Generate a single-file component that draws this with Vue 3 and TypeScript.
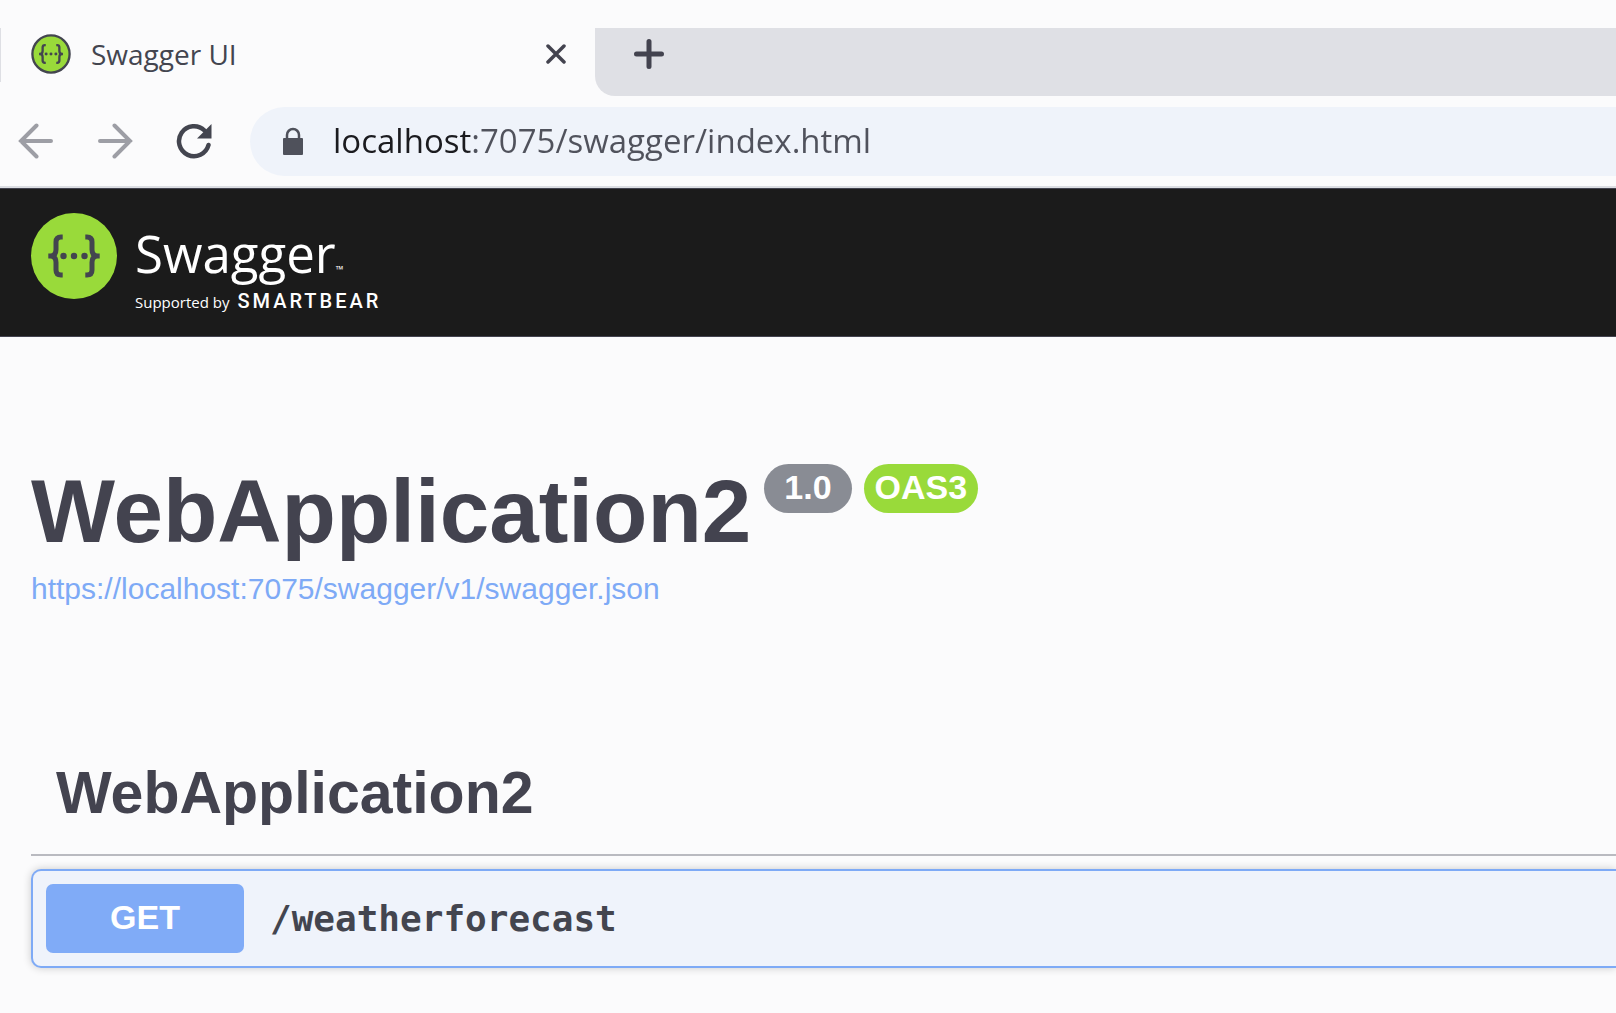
<script setup lang="ts">
import { ref } from 'vue'

interface Operation {
  method: string
  path: string
}

interface ApiInfo {
  title: string
  version: string
  spec: string
  url: string
}

const api: ApiInfo = {
  title: 'WebApplication2',
  version: '1.0',
  spec: 'OAS3',
  url: 'https://localhost:7075/swagger/v1/swagger.json',
}

const operations: Operation[] = [{ method: 'GET', path: '/weatherforecast' }]
const address = ref('localhost:7075/swagger/index.html')
</script>

<template>
  <div class="browser">
    <svg class="defs" aria-hidden="true">
      <symbol id="braces" viewBox="0 0 86 86">
        <g fill="none" stroke="currentColor" stroke-width="5">
          <path d="M31.7 24H30q-5 0-5 5v7.5q0 6.3-5.5 6.5h-2.2h2.2q5.5.2 5.5 6.5V57q0 5 5 5h1.7" />
          <path d="M54.3 24H56q5 0 5 5v7.5q0 6.3 5.5 6.5h2.2h-2.2q-5.5.2-5.5 6.5V57q0 5-5 5h-1.7" />
        </g>
        <g fill="currentColor">
          <circle cx="32.5" cy="43" r="3.2" />
          <circle cx="43" cy="43" r="3.2" />
          <circle cx="53.5" cy="43" r="3.2" />
        </g>
      </symbol>
    </svg>

    <div class="tabs">
      <div class="tab">
        <svg class="favicon" viewBox="0 0 86 86" aria-hidden="true">
          <circle cx="43" cy="43" r="40" fill="#99da3a" stroke="#43454f" stroke-width="5" />
          <use href="#braces" />
        </svg>
        <span class="tab-title">Swagger UI</span>
        <button class="icon-button close" type="button" aria-label="Close tab">
          <svg width="20" height="20" viewBox="0 0 20 20">
            <path d="M2 2l16 16M18 2L2 18" fill="none" stroke="#43434f" stroke-width="3.5" stroke-linecap="round" />
          </svg>
        </button>
      </div>
      <div class="strip">
        <button class="icon-button" type="button" aria-label="New tab">
          <svg width="30" height="30" viewBox="0 0 30 30">
            <path d="M15 2.5v25M2.5 15h25" fill="none" stroke="#43434f" stroke-width="5" stroke-linecap="round" />
          </svg>
        </button>
      </div>
    </div>

    <div class="toolbar">
      <button class="icon-button" type="button" aria-label="Back">
        <svg width="36" height="36" viewBox="0 0 36 36">
          <path d="M33 18H3M18.5 2.5L3 18l15.5 15.5" fill="none" stroke="#9d9ea5" stroke-width="4" stroke-linecap="round" />
        </svg>
      </button>
      <button class="icon-button" type="button" aria-label="Forward">
        <svg width="36" height="36" viewBox="0 0 36 36">
          <path d="M3 18h30M17.5 2.5L33 18 17.5 33.5" fill="none" stroke="#9d9ea5" stroke-width="4" stroke-linecap="round" />
        </svg>
      </button>
      <button class="icon-button" type="button" aria-label="Reload">
        <svg width="36" height="36" viewBox="0 0 36 36">
          <path d="M32.5 22A15 15 0 1 1 28.500 7.500" fill="none" stroke="#43454f" stroke-width="4.5" stroke-linecap="round" />
          <path d="M35.5 1v14.500H21z" fill="#43454f" />
        </svg>
      </button>
      <label class="address">
        <svg width="22" height="28" viewBox="0 0 22 28" aria-hidden="true">
          <path d="M5 12V8a6 6 0 0 1 12 0v4" fill="none" stroke="#4f515b" stroke-width="2.5" />
          <rect x="1" y="11" width="20" height="17" rx="1" fill="#4f515b" />
        </svg>
        <input v-model="address" type="text" aria-label="Address" spellcheck="false" />
      </label>
    </div>

    <header class="topbar">
      <a class="brand" href="#" aria-label="Swagger, supported by SmartBear">
        <svg class="mark" viewBox="0 0 86 86" aria-hidden="true">
          <circle cx="43" cy="43" r="43" fill="#99da3a" />
          <use href="#braces" />
        </svg>
        <span class="words">
          <span class="name">Swagger<small>™</small></span>
          <span class="support">Supported by <b>SMARTBEAR</b></span>
        </span>
      </a>
    </header>

    <main class="content">
      <section class="info">
        <h1>
          {{ api.title }}
          <span class="badges">
            <span class="badge version">{{ api.version }}</span>
            <span class="badge spec">{{ api.spec }}</span>
          </span>
        </h1>
        <a class="spec-link" href="#">{{ api.url }}</a>
      </section>

      <section>
        <h2>{{ api.title }}</h2>
        <div v-for="op in operations" :key="op.path" class="operation">
          <button class="method" type="button">{{ op.method }}</button>
          <a class="path" href="#">{{ op.path }}</a>
        </div>
      </section>
    </main>
  </div>
</template>

<style>
body {
  margin: 0;
  background: #fbfbfc;
}
</style>

<style scoped>
* {
  box-sizing: border-box;
}

.browser {
  min-height: 100vh;
  overflow: hidden;
  background: #fbfbfc;
  color: #43454f;
  font-family: "Liberation Sans", Arial, sans-serif;
}

.defs {
  display: block;
  width: 0;
  height: 0;
}

svg {
  flex: none;
  display: block;
}

a {
  color: inherit;
  text-decoration: none;
}

.icon-button {
  display: flex;
  padding: 0;
  border: 0;
  background: none;
}

.tabs {
  display: flex;
  height: 68px;
  margin-top: 28px;
}

.tab,
.strip {
  display: flex;
  align-items: center;
  padding-bottom: 16px;
}

.tab {
  width: 595px;
  padding-left: 31px;
  padding-right: 29px;
  background: linear-gradient(#dedfe4, #dedfe4) 0 0 / 1px 54px no-repeat;
}

.favicon {
  width: 40px;
  height: 40px;
  margin-right: 20px;
}

.tab-title {
  font: 28px/38px "Open Sans", "Noto Sans", sans-serif;
}

.close {
  margin-left: auto;
}

.strip {
  flex: 1;
  padding-left: 39px;
  border-bottom-left-radius: 20px;
  background: #dfe0e5;
}

.toolbar {
  display: flex;
  align-items: center;
  gap: 43px;
  height: 92px;
  padding-left: 18px;
  border-bottom: 2px solid #dcdee3;
}

.address {
  flex: 1;
  display: flex;
  align-items: center;
  gap: 29px;
  height: 69px;
  margin-left: -5px;
  padding-left: 32px;
  border-radius: 35px 0 0 35px;
  background: #eff3fa;
}

.address input {
  flex: 1;
  height: 60px;
  padding: 0;
  border: 0;
  outline: 0;
  background: linear-gradient(90deg, #1b1b1f 138px, #50525c 138px);
  -webkit-background-clip: text;
  background-clip: text;
  color: transparent;
  font: 33px/60px "Open Sans", "Noto Sans", sans-serif;
}

.topbar {
  height: 149px;
  padding: 24px 31px;
  border: solid #43434f;
  border-width: 1px 0;
  background: #1b1b1b;
}

.brand {
  display: flex;
  gap: 18px;
}

.mark {
  width: 86px;
  height: 86px;
}

.words {
  display: flex;
  flex-direction: column;
  padding-top: 10px;
  font-family: "Open Sans", "Noto Sans", sans-serif;
}

.name {
  color: #fff;
  font-size: 51px;
  line-height: 60px;
}

.name small {
  font-size: 10px;
}

.support {
  margin-top: -8px;
  color: #fff;
  font-size: 15px;
  line-height: 20px;
}

.support b {
  margin-left: 4px;
  font-family: Roboto, "Open Sans", sans-serif;
  font-size: 20px;
  font-weight: 500;
  letter-spacing: 3px;
}

.content {
  padding: 120px 0 0 31px;
}

h1,
h2 {
  margin: 0;
  color: #43434f;
}

h1 {
  display: flex;
  align-items: flex-start;
  gap: 13px;
  font-size: 89px;
  line-height: 108px;
}

.badges {
  display: flex;
  gap: 12px;
  padding-top: 7px;
}

.badge {
  height: 49px;
  border-radius: 25px;
  color: #fff;
  font-size: 34px;
  line-height: 47px;
}

.version {
  padding: 0 20px;
  background: #898c94;
}

.spec {
  padding: 0 11px;
  background: #99da3a;
}

.spec-link {
  display: block;
  color: #7eaaf6;
  font-size: 30px;
  line-height: 48px;
}

h2 {
  margin-top: 144px;
  padding: 0 25px 25px;
  border-bottom: 2px solid #b9bac0;
  font-size: 59px;
  line-height: 72px;
}

.operation {
  display: flex;
  align-items: center;
  gap: 26px;
  height: 99px;
  margin-top: 13px;
  padding: 0 13px;
  border: 2px solid #7eaaf6;
  border-right: 0;
  border-radius: 10px 0 0 10px;
  background: #eff3fb;
  box-shadow: 0 0 8px rgba(0, 0, 0, 0.2);
}

.method {
  width: 198px;
  height: 69px;
  padding: 0 0 4px;
  border: 0;
  border-radius: 7px;
  background: #80abf7;
  color: #fff;
  font: bold 34px/48px "Liberation Sans", Arial, sans-serif;
}

.path {
  font: bold 36px/48px "DejaVu Sans Mono", "Liberation Mono", monospace;
}
</style>
